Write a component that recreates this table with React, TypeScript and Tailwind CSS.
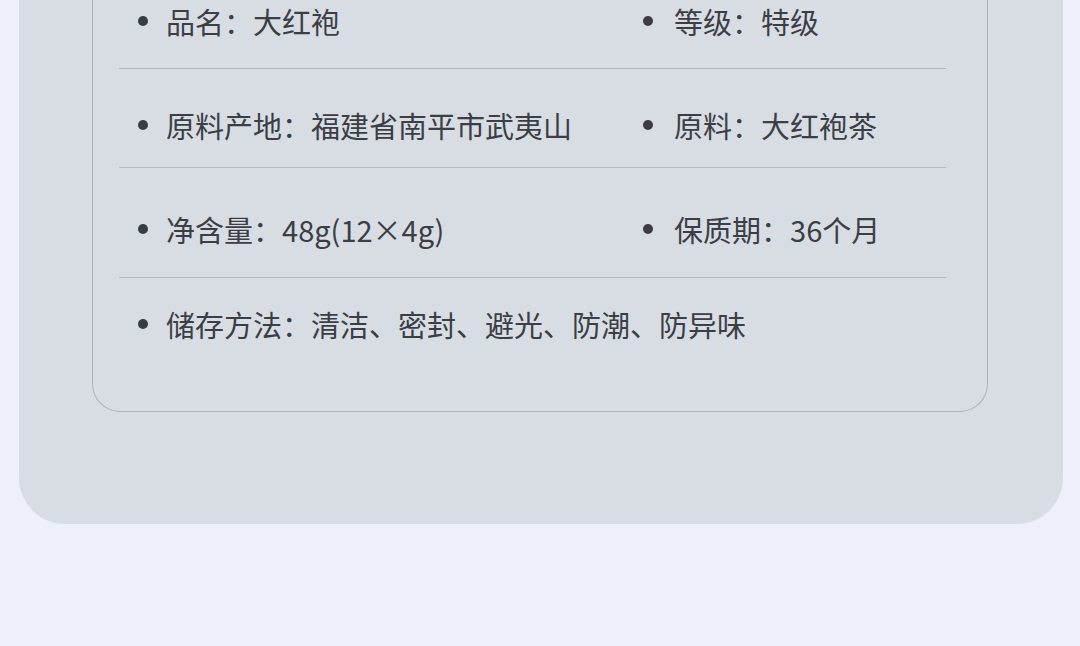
import * as React from 'react'

type Item = {
  label: string
  value: string
}

type Row = {
  left: Item
  right?: Item
  height: string
  pad: string
  border: boolean
}

const rows: Row[] = [
  { left: { label: '品名', value: '大红袍' }, right: { label: '等级', value: '特级' }, height: 'h-[69px]', pad: 'pt-[1px]', border: true },
  { left: { label: '原料产地', value: '福建省南平市武夷山' }, right: { label: '原料', value: '大红袍茶' }, height: 'h-[99px]', pad: 'pt-[36px]', border: true },
  { left: { label: '净含量', value: '48g(12×4g)' }, right: { label: '保质期', value: '36个月' }, height: 'h-[110px]', pad: 'pt-[41px]', border: true },
  { left: { label: '储存方法', value: '清洁、密封、避光、防潮、防异味' }, height: 'h-[133px]', pad: 'pt-[26px]', border: false },
]

const Bullet = ({ item, gap }: { item: Item; gap: string }) => (
  <div className="flex items-center h-[40px]">
    <span className="w-[10px] h-[10px] rounded-full bg-[#3a3c40] shrink-0" />
    <span className={`${gap} text-[29px] leading-[40px] text-[#3b3e44] whitespace-nowrap`}>
      {item.label}：{item.value}
    </span>
  </div>
)

export default function App() {
  return (
    <div
      className="min-h-[646px] bg-[#edf0f8] pl-[19px] pr-[17px]"
      style={{ fontFamily: '"Noto Sans CJK SC", "Noto Sans", sans-serif' }}
    >
      <div className="bg-[#d8dde4] rounded-b-[46px] pl-[73px] pr-[75px] pb-[112px]">
        <div className="border border-t-0 border-[#aeb3ba] rounded-b-[28px]">
          {rows.map((row) => (
            <div
              key={row.left.label}
              className={`ml-[26px] mr-[41px] ${row.height} ${row.pad} ${row.border ? 'border-b border-[#b3b7be]' : ''}`}
            >
              <div className="flex pl-[19px]">
                <div className="w-[505px] shrink-0">
                  <Bullet item={row.left} gap="ml-[18px]" />
                </div>
                {row.right && <Bullet item={row.right} gap="ml-[21px]" />}
              </div>
            </div>
          ))}
        </div>
      </div>
    </div>
  )
}
